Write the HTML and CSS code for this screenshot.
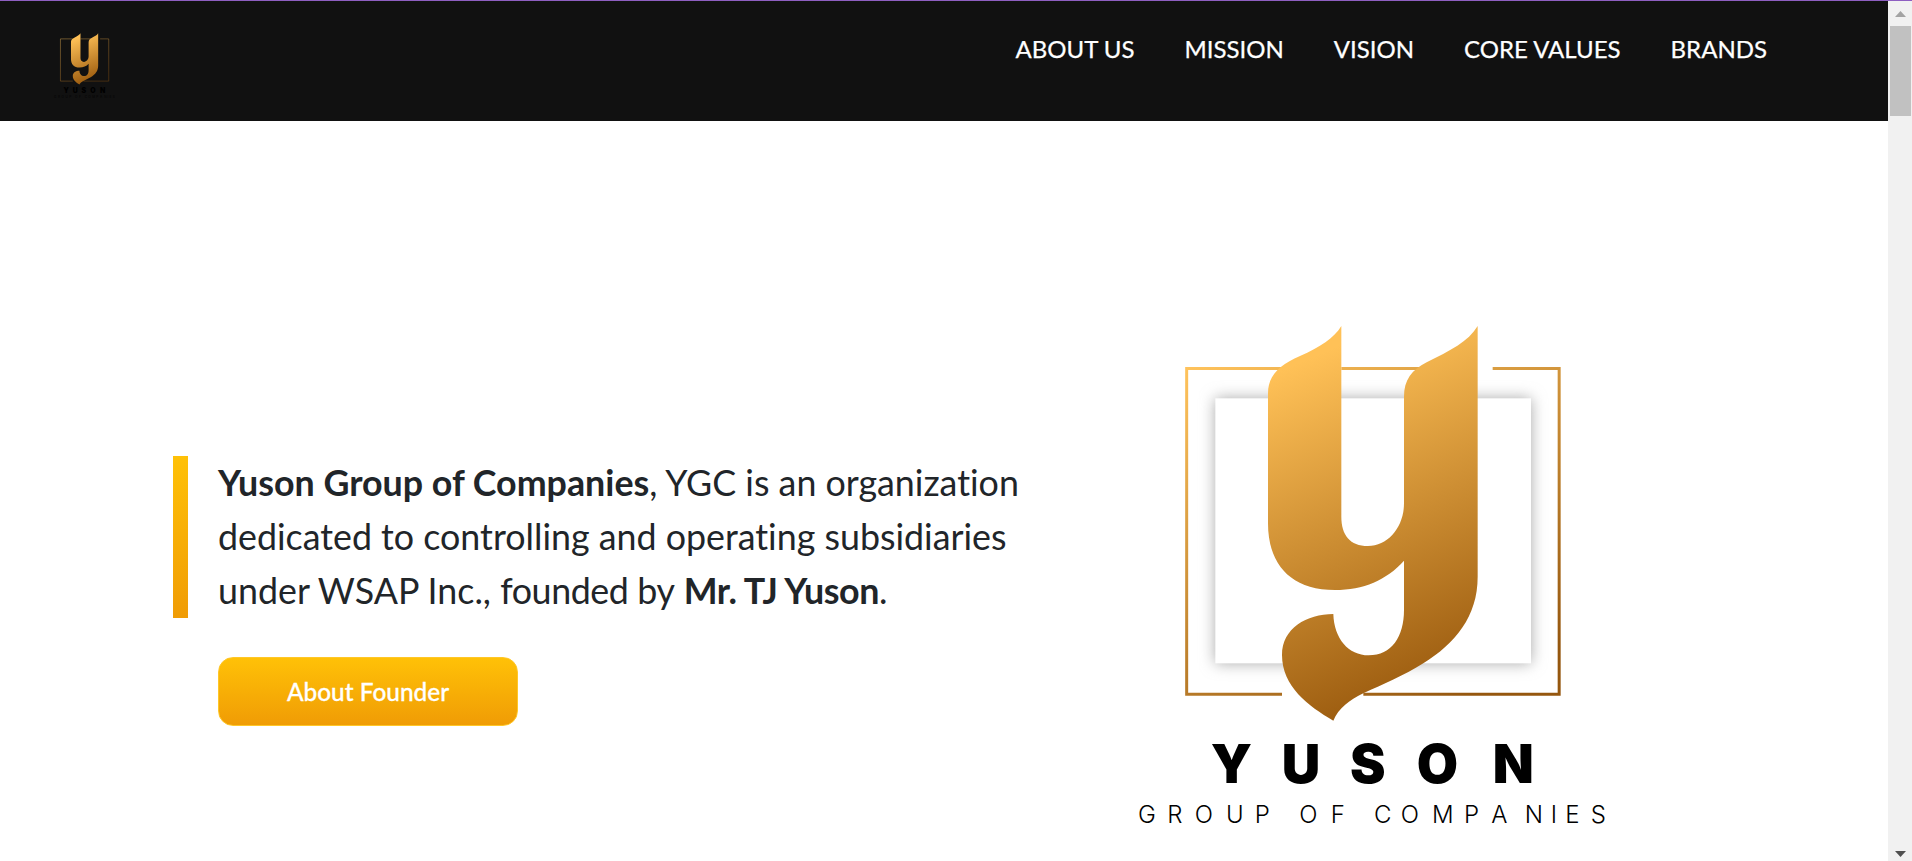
FILE: index.html
```html
<!DOCTYPE html>
<html lang="en">
<head>
<meta charset="utf-8">
<title>Yuson Group of Companies</title>
<link rel="stylesheet" href="styles.css">
</head>
<body>
<div class="page">
  <div class="main">
    <header class="nav">
      <svg class="nav-logo" viewBox="0 0 1500 1620" role="img" aria-label="Yuson logo">
        <use href="#logo-frame"></use>
        <use href="#logo-y"></use>
        <use href="#logo-text"></use>
      </svg>
      <nav class="nav-links">
        <a class="nav-link" href="#about">ABOUT US</a>
        <a class="nav-link" href="#mission">MISSION</a>
        <a class="nav-link" href="#vision">VISION</a>
        <a class="nav-link" href="#values">CORE VALUES</a>
        <a class="nav-link" href="#brands">BRANDS</a>
      </nav>
    </header>
    <section class="hero">
      <div class="intro">
        <div class="quote">
          <div class="accent"></div>
          <p class="lead"><strong>Yuson Group of Companies</strong>, YGC is an organization dedicated to controlling and operating subsidiaries under WSAP Inc., <span class="tight">founded by</span> <strong class="tight">Mr. TJ Yuson</strong>.</p>
        </div>
        <a class="cta" href="#founder">About Founder</a>
      </div>
      <svg class="hero-logo" viewBox="0 0 1500 1620" role="img" aria-label="Yuson Group of Companies logo">
        <defs>
          <linearGradient id="gold" gradientUnits="userSpaceOnUse" x1="480" y1="200" x2="900" y2="1180">
            <stop offset="0" stop-color="#ffc157"/>
            <stop offset="1" stop-color="#9a5a0e"/>
          </linearGradient>
          <linearGradient id="gold-frame" gradientUnits="userSpaceOnUse" x1="165" y1="201" x2="770" y2="1320">
            <stop offset="0" stop-color="#ffc35c"/>
            <stop offset="1" stop-color="#95570f"/>
          </linearGradient>
          <filter id="soft" x="-20%" y="-20%" width="140%" height="140%">
            <feGaussianBlur stdDeviation="22"/>
          </filter>
          <g id="logo-frame">
            <path fill="none" stroke="url(#gold-frame)" stroke-width="9" d="M456 205.500H170V1183H456M700 1183H1287.500V205.500H1088M634 205.500H872"/>
          </g>
          <g id="logo-y">
            <path fill="url(#gold)" d="M634 78V650C634 705 660 738 714 738C775 738 822 680 822 610V290C822 240 845 210 890 187C960 152 1015 125 1043 78V830C1043 950 975 1030 880 1090C820 1128 760 1152 700 1180C660 1200 625 1225 610 1262C535 1218 456 1160 456 1065C456 985 530 942 610 942C612 1015 655 1066 716 1066C785 1066 822 1010 822 930V782C770 840 700 870 615 870C480 870 414 790 414 670V280C414 225 450 195 510 168C570 141 612 115 634 78Z"/>
          </g>
          <g id="logo-text">
            <text class="mark-name" x="242 455 660 860 1088" y="1448">YUSON</text>
            <text class="mark-sub" x="24 112 194 288 374 440 508 602 670 732 812 906 1002 1084 1184 1262 1306 1382" y="1568">GROUP OF COMPANIES</text>
          </g>
        </defs>
        <use href="#logo-frame"></use>
        <rect x="256" y="295" width="947" height="795" fill="#a8a8a8" filter="url(#soft)"></rect>
        <rect x="256" y="295" width="947" height="795" fill="#fff"></rect>
        <use href="#logo-y"></use>
        <use href="#logo-text"></use>
      </svg>
    </section>
  </div>
  <div class="scrollbar">
    <svg class="arrow" viewBox="0 0 11 6"><path class="arrow-up" d="M5.500 0L11 6H0Z"/></svg>
    <div class="thumb"></div>
    <div class="track"></div>
    <svg class="arrow" viewBox="0 0 11 6"><path class="arrow-down" d="M0 0H11L5.500 6Z"/></svg>
  </div>
</div>
</body>
</html>
```
FILE: styles.css
```css
html, body {
  margin: 0;
  height: 100%;
  overflow: hidden;
  background: #fff;
}
body {
  font-family: Lato, "Liberation Sans", sans-serif;
  font-variant-ligatures: none;
  color: #212529;
}
.page {
  display: flex;
  height: 860px;
  border-top: 1px solid #8e5fc1;
}
.main {
  flex: 1;
  min-width: 0;
}
.nav {
  display: flex;
  justify-content: space-between;
  height: 120px;
  background: #111;
  padding: 0 121px 0 53px;
  box-sizing: border-box;
}
.nav-logo {
  width: 65px;
  height: 70px;
  margin-top: 29px;
}
.nav-links {
  display: flex;
  gap: 50px;
  padding-top: 33px;
}
.nav-link {
  color: #fff;
  font-size: 24px;
  line-height: 30px;
  -webkit-text-stroke: 0.25px #fff;
  text-decoration: none;
}
.hero {
  display: flex;
  justify-content: space-between;
  padding: 0 258px 0 173px;
}
.intro {
  margin-top: 335px;
}
.quote {
  display: flex;
  gap: 30px;
}
.accent {
  width: 15px;
  background: linear-gradient(#ffc107, #f09c05);
}
.lead {
  margin: 0;
  width: 840px;
  font-size: 35.8px;
  line-height: 54px;
}
.lead strong {
  font-weight: 700;
}
.lead .tight {
  letter-spacing: -0.4px;
}
.cta {
  display: flex;
  align-items: center;
  justify-content: center;
  width: 300px;
  height: 69px;
  box-sizing: border-box;
  margin: 39px 0 0 45px;
  border: 1px solid #ffc727;
  border-radius: 15px;
  background: linear-gradient(#ffc107, #f09c05);
  color: #fff;
  font-size: 24.4px;
  font-weight: 500;
  -webkit-text-stroke: 0.3px #fff;
  text-decoration: none;
}
.hero-logo {
  width: 500px;
  height: 540px;
  margin-top: 179px;
}
.mark-name {
  font-family: Inter, sans-serif;
  font-size: 160px;
  font-weight: 900;
  fill: #000;
}
.mark-sub {
  font-family: Inter, sans-serif;
  font-size: 72px;
  font-weight: 300;
  fill: #000;
}
.scrollbar {
  display: flex;
  flex-direction: column;
  width: 24px;
  background: #f1f1f1;
}
.arrow {
  display: block;
  flex: none;
  width: 11px;
  height: 6px;
  margin: 10px 0 0 7px;
}
.arrow:last-child {
  margin: 0 0 4px 7px;
}
.arrow-up {
  fill: #a3a3a3;
}
.arrow-down {
  fill: #505050;
}
.thumb {
  flex: none;
  width: 21px;
  height: 90px;
  margin: 9px 0 0 2px;
  background: #c1c1c1;
}
.track {
  flex: 1;
}
```
